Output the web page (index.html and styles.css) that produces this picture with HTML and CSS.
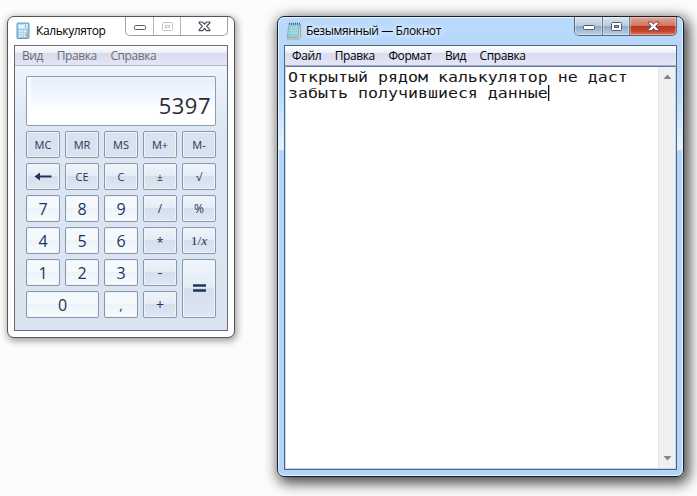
FILE: index.html
```html
<!DOCTYPE html>
<html lang="ru">
<head>
<meta charset="utf-8">
<title>Калькулятор и Блокнот</title>
<link rel="stylesheet" href="styles.css">
</head>
<body>
<main class="desktop">
  <section class="window calc">
    <header class="titlebar">
      <svg class="app-icon" width="14" height="18" viewBox="0 0 14 18">
        <rect x="1" y="1" width="12" height="15.5" rx="1" fill="#9cc8ea" stroke="#5b9bd0"/>
        <rect x="2.5" y="2.5" width="9" height="4" fill="#e8f5fd"/><path d="M9.5 3v3" stroke="#c99a3c"/>
        <path d="M3 9h8M3 11.5h8M3 14h8" stroke="#f5fbff" stroke-width="1.5" stroke-dasharray="1.7 .8"/>
        <path d="M10.5 11v4" stroke="#f0a030" stroke-width="1.6"/>
      </svg>
      <h1 class="title"><span class="fit">Калькулятор</span></h1>
      <div class="controls">
        <span class="control"><svg width="14" height="10"><rect x="1.5" y="4.5" width="11" height="4" rx="1" fill="#fff" stroke="#555a6b"/></svg></span>
        <span class="control"><svg width="13" height="11"><rect x="1.5" y="1.5" width="10" height="8" rx="1" fill="none" stroke="#c5c5c8"/><rect x="4.5" y="4.5" width="4" height="2" fill="none" stroke="#c5c5c8"/></svg></span>
        <span class="control"><svg width="13" height="11"><path d="M1.2 1h3.3l2 2.2L8.5 1h3.3v1L8.7 5.3 11.8 8.7v1H8.5l-2-2.2-2 2.2H1.2v-1l3.1-3.4L1.2 2z" fill="#fff" stroke="#484d5c" stroke-width="1.2"/></svg></span>
      </div>
    </header>
    <div class="client">
      <nav class="menubar"><span>Вид</span><span>Правка</span><span>Справка</span></nav>
      <div class="panel">
        <output class="display">5397</output>
        <div class="keys">
          <button class="key mem">MC</button><button class="key mem">MR</button><button class="key mem">MS</button><button class="key mem">M+</button><button class="key mem">M-</button>
          <button class="key"><svg width="18" height="9"><path d="M5 4.500h12.500" stroke="#20355c" stroke-width="2"/><path d="M.5 4.500 6 .5v8z" fill="#20355c"/></svg></button><button class="key">CE</button><button class="key">C</button><button class="key">±</button><button class="key">√</button>
          <button class="key num">7</button><button class="key num">8</button><button class="key num">9</button><button class="key op">/</button><button class="key op">%</button>
          <button class="key num">4</button><button class="key num">5</button><button class="key num">6</button><button class="key star">*</button><button class="key inverse">1/<i>x</i></button>
          <button class="key num">1</button><button class="key num">2</button><button class="key num">3</button><button class="key sign">-</button><button class="key equals"><svg width="13" height="9"><path d="M0 1.500h13M0 6.500h13" stroke="#20355c" stroke-width="2.500"/></svg></button>
          <button class="key num zero">0</button><button class="key num comma">,</button><button class="key sign">+</button>
        </div>
      </div>
    </div>
  </section>

  <section class="window notepad">
    <header class="titlebar">
      <svg class="app-icon" width="16" height="18" viewBox="0 0 16 18">
        <path d="M3.5 2.5h11v13l-1.5 1.5H1.500z" fill="#d8d2bc" stroke="#a39c84" stroke-width=".8"/>
        <path d="M3 2h10.500L12 15.500H1z" fill="#8fcfdc" stroke="#78afbd" stroke-width=".7"/>
        <path d="M4 6h8M3.700 8.500h8M3.400 11h8" stroke="#b9e6ec" stroke-width=".8"/>
        <path d="M3 1.700h11.500" stroke="#4d626c" stroke-width="2" stroke-dasharray="1 1"/>
      </svg>
      <h1 class="title"><span class="fit">Безымянный — Блокнот</span></h1>
      <div class="controls">
        <span class="control"><svg width="14" height="10"><rect x="1.500" y="4.500" width="11" height="4" rx="1" fill="#fff" stroke="#515a70"/></svg></span>
        <span class="control"><svg width="13" height="11"><rect x="1.500" y="1.500" width="10" height="8" rx="1" fill="#fff" stroke="#515a70"/><rect x="4.500" y="4.500" width="4" height="2" fill="#9db0c7" stroke="#515a70"/></svg></span>
        <span class="control close"><svg width="13" height="11"><path d="M1.2 1h3.3l2 2.2L8.5 1h3.3v1L8.7 5.3 11.8 8.7v1H8.5l-2-2.2-2 2.2H1.2v-1l3.1-3.4L1.2 2z" fill="#fff" stroke="#5b4650"/></svg></span>
      </div>
    </header>
    <div class="client">
      <nav class="menubar"><span>Файл</span><span>Правка</span><span>Формат</span><span>Вид</span><span>Справка</span></nav>
      <div class="editor">
        <div class="text"><p>Открытый рядом калькулятор не даст</p><p>забыть получившиеся данные<span class="caret"></span></p></div>
        <div class="scrollbar">
          <svg width="9" height="5"><path d="M.5 5 4.500.5l4 4.500z" fill="#85858a"/></svg>
          <svg width="9" height="5"><path d="M.5 0 4.500 4.500 8.500 0z" fill="#85858a"/></svg>
        </div>
      </div>
    </div>
  </section>
</main>
</body>
</html>
```

FILE: styles.css
```css
* { box-sizing: border-box; }
body {
  margin: 0;
  background: #fcfcfc;
  font-family: "Open Sans", "Noto Sans", sans-serif;
  font-size: 12px;
  color: #000;
}
.desktop { position: relative; width: 697px; height: 496px; overflow: hidden; }
.window {
  position: absolute;
  display: flex;
  flex-direction: column;
  padding: 0 6px 6px;
  border: 1px solid #555;
  border-radius: 7px;
}
.calc {
  left: 7px; top: 16px; width: 228px; height: 322px;
  background: #fff;
  box-shadow: 1px 2px 7px 1px rgba(0, 0, 0, .38);
}
.notepad {
  left: 277px; top: 16px; width: 407px; height: 461px;
  border-color: #15202c;
  background: linear-gradient(#b9dafb, #b5d6fa 45px, #bcdafa 80px, #e8f3fd 132px, #b4d5f9 134px, #b4d5f9);
  box-shadow: inset 0 0 0 1px #e5f4ff, 3px 4px 14px 2px rgba(0, 0, 0, .74);
}
.titlebar { display: flex; height: 28px; flex: none; }
.app-icon { margin: 5px 0 0 2px; flex: none; }
.title {
  flex: 1;
  margin: 5px 0 0 6px;
  font-size: 12px;
  font-weight: 400;
  line-height: 18px;
  white-space: nowrap;
}
.notepad .title { margin-left: 4px; }
.fit { display: inline-block; letter-spacing: -.4px; }
.notepad .fit { letter-spacing: -.4px; text-shadow: 0 0 7px #fff, 0 0 7px #fff; }
.controls {
  display: grid;
  grid-template-columns: 28px 27px 1fr;
  width: 103px;
  height: 19px;
  border: 1px solid #a0a0a4;
  border-top: 0;
  border-radius: 0 0 5px 5px;
  overflow: hidden;
}
.control { display: grid; place-items: center; border-right: 1px solid #b6b6b9; }
.control:last-child { border-right: 0; }
.notepad .controls { border-color: #59697d; }
.notepad .control {
  border-color: #66778e;
  background: linear-gradient(#d9e5f2, #bccbdd 48%, #91a8c3 50%, #b9d1e7);
  box-shadow: inset 0 0 0 1px rgba(255, 255, 255, .35);
}
.notepad .close { background: linear-gradient(#e3a696, #cf7562 48%, #b53321 50%, #c9452d 80%, #df7b5d); }
.client {
  display: flex;
  flex-direction: column;
  flex: 1;
  min-height: 0;
  border: 1px solid #666b75;
}
.menubar {
  display: flex;
  flex: none;
  gap: 13.6px;
  height: 20px;
  padding-left: 7px;
  font-size: 12px;
  line-height: 20px;
  letter-spacing: -.4px;
  border-bottom: 1px solid #b5b5cb;
  background: linear-gradient(#fff, #eceff9 35%, #d7dcef 38%, #e3e5f5 95%);
}
.calc .menubar { color: #6d6d70; }
.panel {
  flex: 1;
  padding: 10px 11px 0;
  background: linear-gradient(#edf4fc, #dce7f3 65px, #d9e4f0);
}
.display {
  display: flex;
  align-items: flex-end;
  justify-content: flex-end;
  width: 190px;
  height: 50px;
  padding: 0 4px 6px;
  border: 1px solid #8c9db3;
  border-radius: 2px;
  background: linear-gradient(#e4eefa, #f4f9ff 45%, #fff 70%);
  box-shadow: inset 3px 0 5px #fff;
  color: #2d2d30;
  font-size: 22px;
  letter-spacing: .5px;
  line-height: 28px;
}
.keys {
  display: grid;
  grid-template-columns: repeat(5, 34px);
  grid-auto-rows: 27px;
  gap: 5px;
  margin-top: 5px;
}
.key {
  display: grid;
  place-items: center;
  place-content: center;
  padding: 0;
  border: 1px solid #8797ae;
  border-radius: 2px;
  background: linear-gradient(#f0f5fa, #e4ecf5 48%, #d5e0ec 50%, #dde7f2);
  box-shadow: inset 0 0 0 1px #edf4fb;
  font: 11px/16px "Open Sans", "Noto Sans", sans-serif;
  color: #20355c;
}
.mem { background: #d8e3ef; }
.num {
  background: linear-gradient(#f4f8fc, #f7fafd 48%, #edf3f9 50%, #f8fcff);
  font-size: 16px;
}
.op { font-size: 12px; }
.sign { font-size: 14px; }
.star { padding-top: 2px; font-size: 13px; }
.comma { font-size: 13px; }
.inverse { display: block; font-family: "Liberation Serif", serif; font-size: 13.5px; }
.zero { grid-column: span 2; }
.equals { grid-row: span 2; }
.notepad .client { border-color: #4e6680; }
.notepad .menubar { border-bottom-color: #a9aac5; }
.editor {
  display: flex;
  flex: 1;
  border: 1px solid #b8dced;
  border-top-color: #587da7;
  background: #fff;
}
.text {
  flex: 1;
  padding: 2px 0 0 2px;
  font: 13.6px/16px "DejaVu Sans Mono", monospace;
  color: #181818;
  white-space: pre;
}
.text p { width: 300px; margin: 0; transform: scaleX(1.221); transform-origin: 0 0; }
.caret { display: inline-block; width: 1px; height: 16px; background: #000; vertical-align: top; }
.scrollbar {
  display: flex;
  flex-direction: column;
  justify-content: space-between;
  align-items: center;
  width: 17px;
  padding: 7px 0;
  border-left: 1px solid #e5e5e5;
  background: #f0f0f0;
}
```
